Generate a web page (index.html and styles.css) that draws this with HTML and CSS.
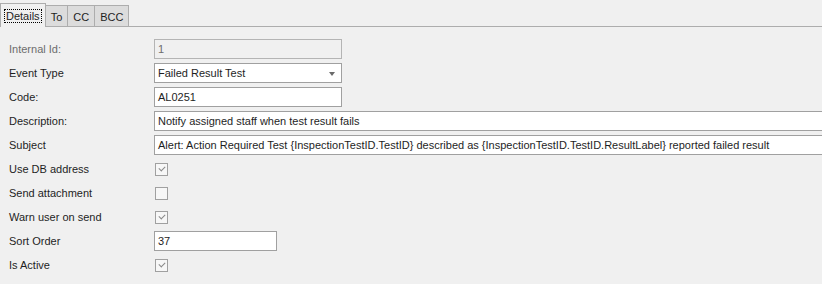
FILE: index.html
```html
<!DOCTYPE html>
<html>
<head>
<meta charset="utf-8">
<link rel="stylesheet" href="styles.css">
</head>
<body>
<div class="tabs">
  <div class="tab active"><span class="focus">Details</span></div>
  <div class="tab">To</div>
  <div class="tab">CC</div>
  <div class="tab">BCC</div>
</div>
<div class="form">
  <div class="row"><div class="label disabled">Internal Id:</div><div class="input disabled w-short">1</div></div>
  <div class="row"><div class="label">Event Type</div><div class="input combo w-short">Failed Result Test<span class="arrow"></span></div></div>
  <div class="row"><div class="label">Code:</div><div class="input w-short">AL0251</div></div>
  <div class="row"><div class="label">Description:</div><div class="input w-full">Notify assigned staff when test result fails</div></div>
  <div class="row"><div class="label">Subject</div><div class="input w-full">Alert: Action Required Test {InspectionTestID.TestID} described as {InspectionTestID.TestID.ResultLabel} reported failed result</div></div>
  <div class="row"><div class="label">Use DB address</div><div class="check on"></div></div>
  <div class="row"><div class="label">Send attachment</div><div class="check"></div></div>
  <div class="row"><div class="label">Warn user on send</div><div class="check on"></div></div>
  <div class="row"><div class="label">Sort Order</div><div class="input w-sort">37</div></div>
  <div class="row"><div class="label">Is Active</div><div class="check on"></div></div>
</div>
</body>
</html>
```

FILE: styles.css
```css
html, body {
  margin: 0;
  padding: 0;
  background: #f0f0f0;
  width: 822px;
  height: 284px;
  overflow: hidden;
  font-family: "Liberation Sans", Arial, sans-serif;
  font-size: 11px;
  color: #1e1e1e;
}
.tabs {
  display: flex;
  align-items: flex-end;
  height: 27px;
  border-bottom: 1px solid #adadad;
  box-sizing: border-box;
}
.tab {
  height: 21px;
  box-sizing: border-box;
  border: 1px solid #adadad;
  border-bottom: none;
  border-left: none;
  background: #dcdcdc;
  padding: 3px 5px 0 5px;
  line-height: 16px;
}
.tab.active {
  background: #f0f0f0;
  border-left: 1px solid #adadad;
  margin-bottom: -1px;
  padding: 4px 4px 0 4px;
  height: 24px;
}
.focus {
  outline: 1px dotted #000;
  outline-offset: 0;
  padding: 0 1px;
}
.form {
  padding-top: 10px;
}
.row {
  display: flex;
  align-items: center;
  height: 24px;
}
.label {
  width: 145px;
  padding-left: 9px;
  flex: none;
}
.label.disabled { color: #6d6d6d; }
.input {
  height: 20px;
  box-sizing: border-box;
  border: 1px solid #a0a0a0;
  background: #fff;
  padding: 0 3px;
  line-height: 18px;
  white-space: nowrap;
  overflow: hidden;
  flex: none;
}
.input.disabled {
  background: #f0f0f0;
  border-color: #b4b4b4;
  color: #6d6d6d;
}
.w-short { width: 188px; }
.w-full { width: 680px; }
.w-sort { width: 123px; }
.combo { position: relative; }
.arrow {
  position: absolute;
  right: 6px;
  top: 8px;
  width: 0;
  height: 0;
  border-left: 3.5px solid transparent;
  border-right: 3.5px solid transparent;
  border-top: 4px solid #6a6a6a;
}
.check {
  width: 13px;
  height: 13px;
  box-sizing: border-box;
  border: 1px solid #a0a0a0;
  background: #f7f7f7;
  margin-left: 1px;
  position: relative;
}
.check.on::after {
  content: "";
  position: absolute;
  left: 3px;
  top: 2px;
  width: 5px;
  height: 3px;
  border-left: 1px solid #8a8a8a;
  border-bottom: 1px solid #8a8a8a;
  transform: rotate(-45deg);
}
```
